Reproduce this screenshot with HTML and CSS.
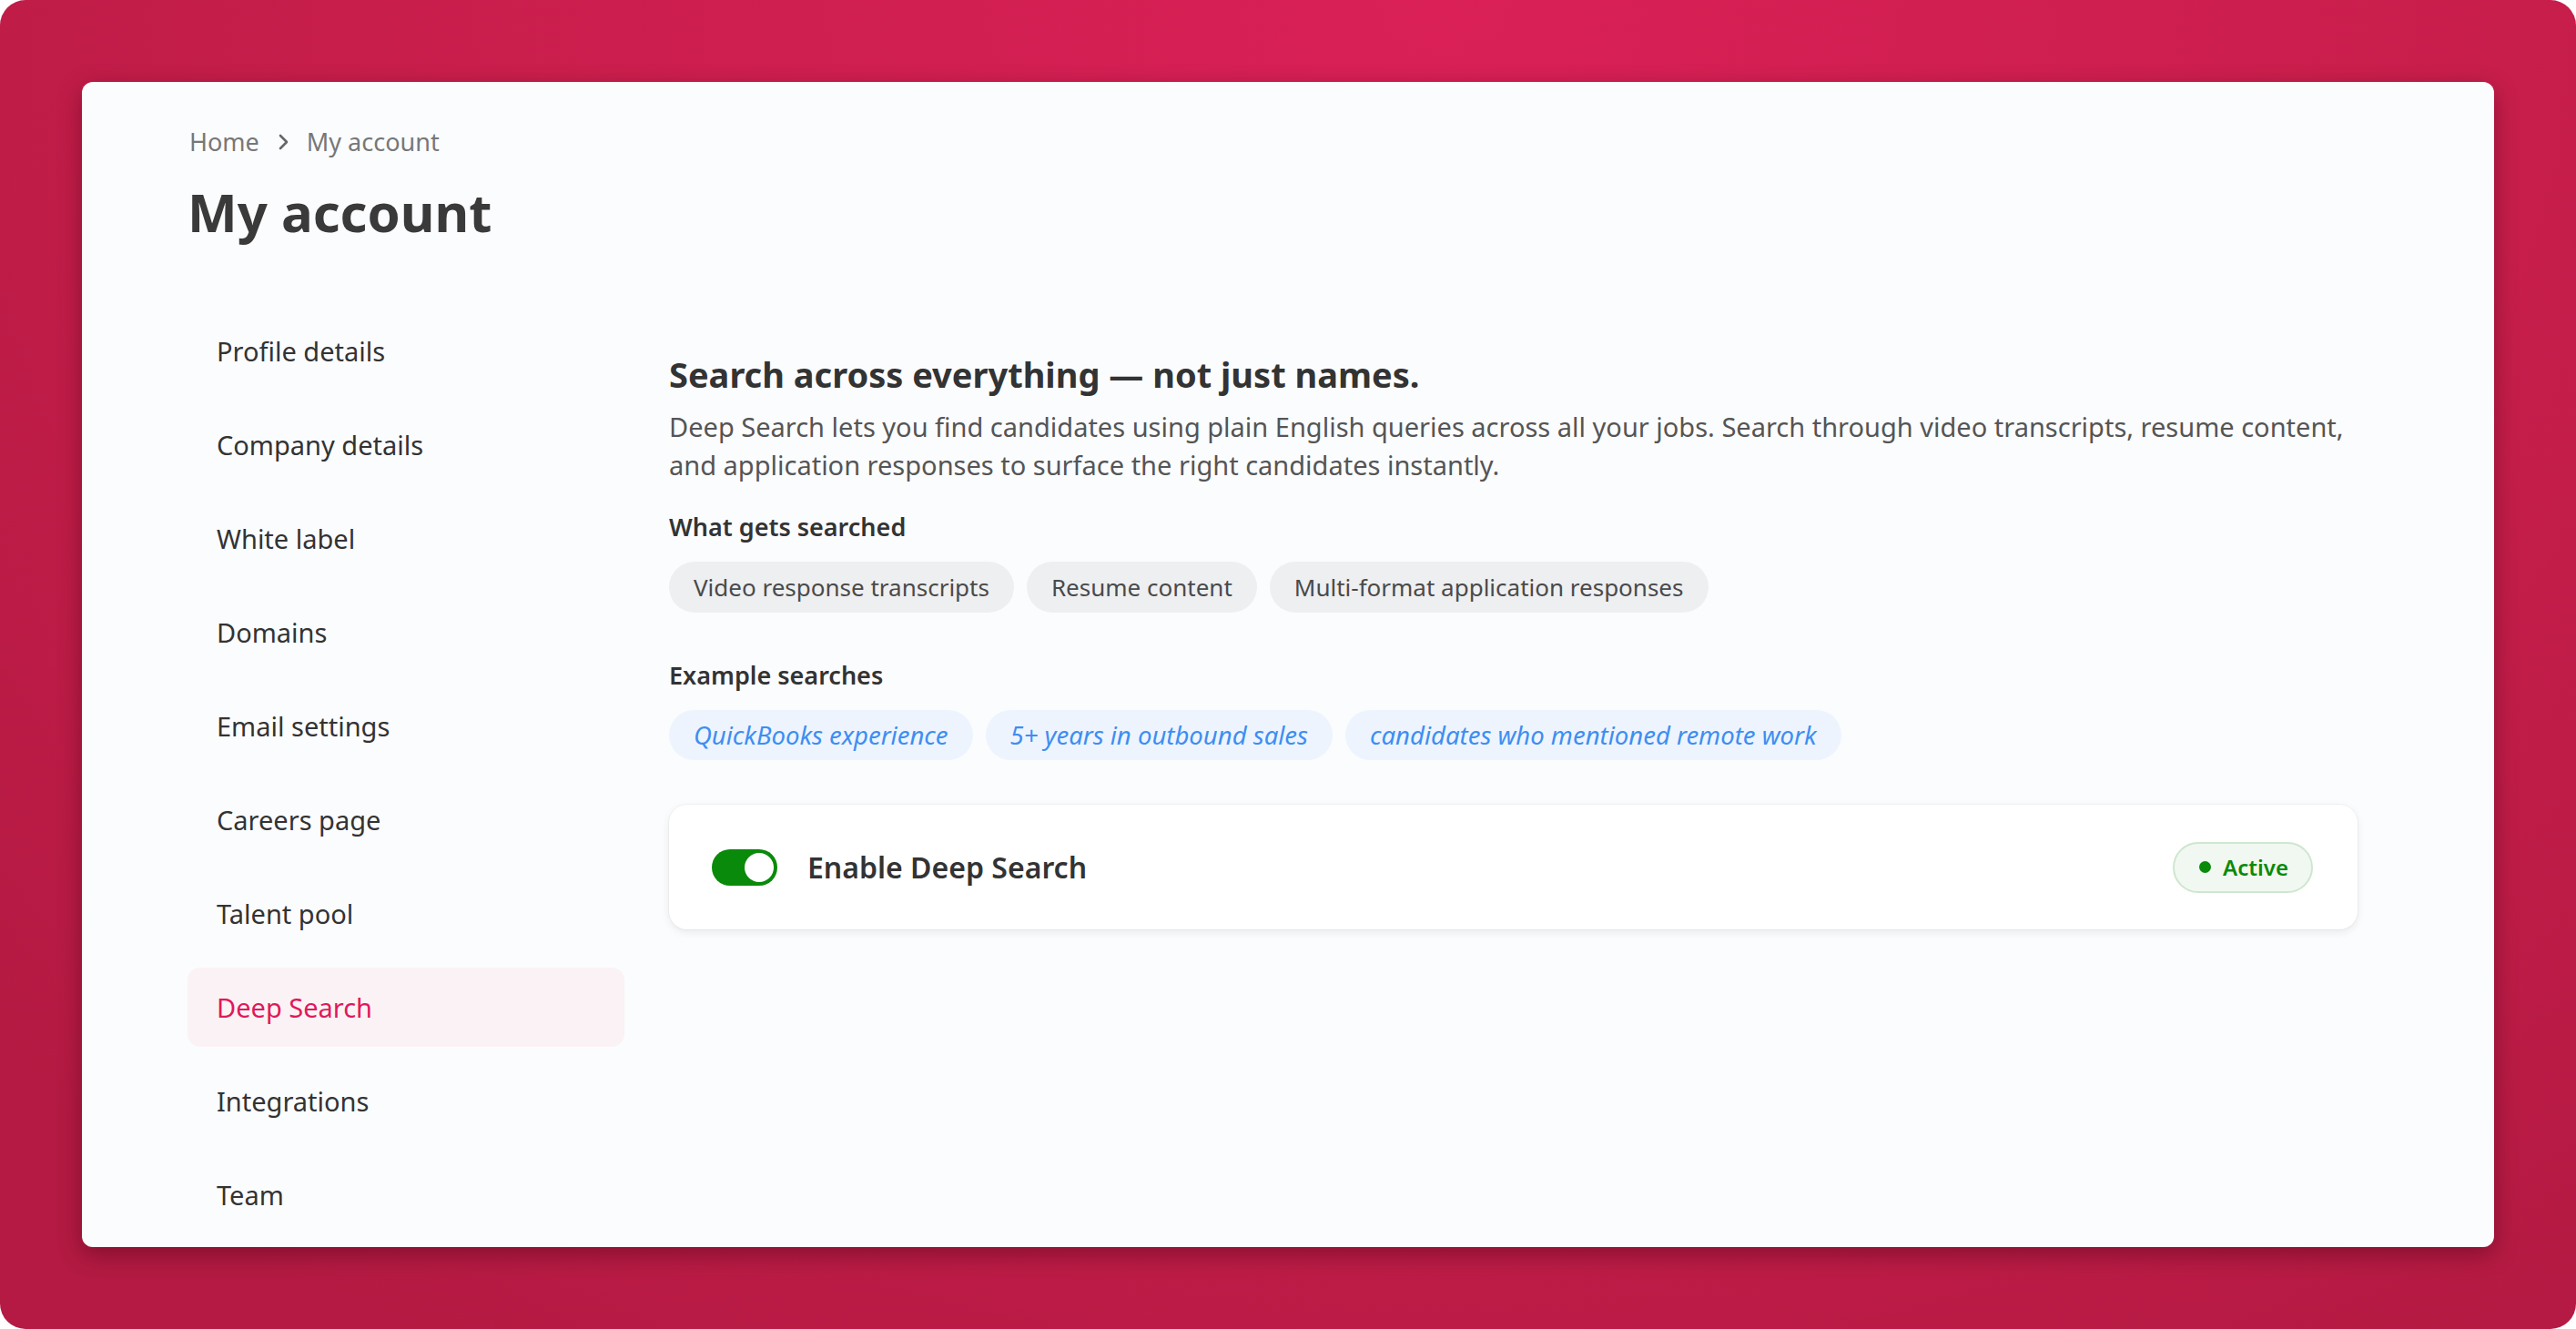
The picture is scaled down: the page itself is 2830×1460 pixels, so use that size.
FILE: index.html
```html
<!DOCTYPE html>
<html lang="en">
<head>
<meta charset="UTF-8">
<meta name="viewport" content="width=device-width, initial-scale=1.0">
<title>My account</title>
<link rel="stylesheet" href="styles.css">
</head>
<body>

<div class="frame">
    <div class="card">
        <!-- Breadcrumb and page title -->
        <div class="breadcrumb">
            <a href="#">Home</a>
            <svg class="crumb-sep" width="12" height="18" viewBox="0 0 12 18">
                <path d="M3 2l7 7-7 7" fill="none" stroke="#666" stroke-width="2.6" stroke-linecap="round" stroke-linejoin="round"/>
            </svg>
            <span>My account</span>
        </div>
        <h1 class="page-title">My account</h1>

        <div class="account">
            <!-- Settings navigation -->
            <nav class="side-nav">
                <a href="#" class="nav-item">Profile details</a>
                <a href="#" class="nav-item">Company details</a>
                <a href="#" class="nav-item">White label</a>
                <a href="#" class="nav-item">Domains</a>
                <a href="#" class="nav-item">Email settings</a>
                <a href="#" class="nav-item">Careers page</a>
                <a href="#" class="nav-item">Talent pool</a>
                <a href="#" class="nav-item active">Deep Search</a>
                <a href="#" class="nav-item">Integrations</a>
                <a href="#" class="nav-item">Team</a>
            </nav>

            <!-- Deep Search settings -->
            <main class="settings">
                <h2>Search across everything — not just names.</h2>
                <p class="lead">Deep Search lets you find candidates using plain English queries across all your jobs. Search through video transcripts, resume content, and application responses to surface the right candidates instantly.</p>

                <h3 class="group-label">What gets searched</h3>
                <div class="chips">
                    <span class="chip">Video response transcripts</span>
                    <span class="chip">Resume content</span>
                    <span class="chip">Multi-format application responses</span>
                </div>

                <h3 class="group-label spaced">Example searches</h3>
                <div class="chips">
                    <span class="chip example">QuickBooks experience</span>
                    <span class="chip example">5+ years in outbound sales</span>
                    <span class="chip example">candidates who mentioned remote work</span>
                </div>

                <div class="toggle-card">
                    <label class="switch">
                        <input type="checkbox" checked>
                        <span class="slider"></span>
                    </label>
                    <span class="toggle-label">Enable Deep Search</span>
                    <span class="status-badge"><span class="dot"></span>Active</span>
                </div>
            </main>
        </div>
    </div>
</div>

</body>
</html>
```

FILE: styles.css
```css
body {
    margin: 0;
    background-color: #fff;
    font-family: "Noto Sans", "Open Sans", sans-serif;
}
.frame {
    height: 100vh;
    box-sizing: border-box;
    padding: 90px;
    border-radius: 28px;
    background: radial-gradient(ellipse 75% 120% at 56% 0%, #da2057 0%, #c81e4c 55%, #b41a43 100%);
}
.card {
    height: 100%;
    box-sizing: border-box;
    padding: 47px 150px 0 116px;
    background: #fbfcfe;
    border-radius: 12px;
    box-shadow: 0 8px 26px rgba(70, 0, 20, 0.45);
    overflow: hidden;
}
.breadcrumb {
    display: flex;
    align-items: center;
    gap: 20px;
    padding-left: 2px;
    font-size: 27px;
    line-height: 38px;
    color: #777;
}
.breadcrumb a {
    color: #777;
    text-decoration: none;
}
.page-title {
    margin: 20px 0 0;
    font-size: 58px;
    line-height: 75px;
    font-weight: 700;
    color: #3a3a3a;
}
.account {
    display: grid;
    grid-template-columns: 480px 1fr;
    gap: 49px;
    margin-top: 72px;
}
.side-nav {
    display: flex;
    flex-direction: column;
    gap: 16px;
}
.nav-item {
    display: flex;
    align-items: center;
    height: 87px;
    padding: 0 32px;
    border-radius: 14px;
    font-size: 29px;
    color: #333;
    text-decoration: none;
}
.nav-item.active {
    background-color: #fbf2f5;
    color: #e0195a;
}
.settings {
    padding-top: 44px;
}
.settings h2 {
    margin: 0;
    font-size: 38px;
    line-height: 50px;
    font-weight: 700;
    color: #333;
}
.lead {
    margin: 12px 0 0;
    font-size: 29px;
    line-height: 42px;
    color: #555;
}
.group-label {
    margin: 28px 0 0;
    font-size: 27px;
    line-height: 38px;
    font-weight: 600;
    color: #333;
}
.group-label.spaced {
    margin-top: 50px;
}
.chips {
    display: flex;
    gap: 14px;
    margin-top: 19px;
}
.chip {
    display: flex;
    align-items: center;
    height: 56px;
    padding: 0 27px;
    border-radius: 28px;
    background-color: #eeeff1;
    font-size: 26px;
    color: #4a4a4a;
}
.chip.example {
    height: 55px;
    background-color: #edf4fd;
    color: #3d8ef2;
    font-size: 27.5px;
    font-style: italic;
}
.toggle-card {
    display: flex;
    align-items: center;
    height: 137px;
    box-sizing: border-box;
    margin-top: 49px;
    padding: 0 49px 0 47px;
    background: #fff;
    border-radius: 20px;
    box-shadow: 0 3px 10px rgba(0, 0, 0, 0.08), 0 0 0 1px rgba(0, 0, 0, 0.03);
}
.switch {
    position: relative;
    width: 72px;
    height: 40px;
    flex-shrink: 0;
}
.switch input {
    display: none;
}
.slider {
    position: absolute;
    inset: 0;
    border-radius: 20px;
    background-color: #0a8a0a;
    cursor: pointer;
}
.slider::after {
    content: "";
    position: absolute;
    top: 4px;
    right: 4px;
    width: 32px;
    height: 32px;
    border-radius: 50%;
    background: #fff;
}
.toggle-label {
    margin-left: 33px;
    font-size: 32px;
    font-weight: 600;
    color: #333;
}
.status-badge {
    display: flex;
    align-items: center;
    gap: 13px;
    margin-left: auto;
    height: 56px;
    box-sizing: border-box;
    padding: 0 25px 0 27px;
    border: 2px solid #cfe6cf;
    border-radius: 28px;
    background-color: #f1f8f1;
    font-size: 24px;
    font-weight: 600;
    color: #0a8a0a;
}
.dot {
    width: 13px;
    height: 13px;
    border-radius: 50%;
    background-color: #0a8a0a;
}
```
